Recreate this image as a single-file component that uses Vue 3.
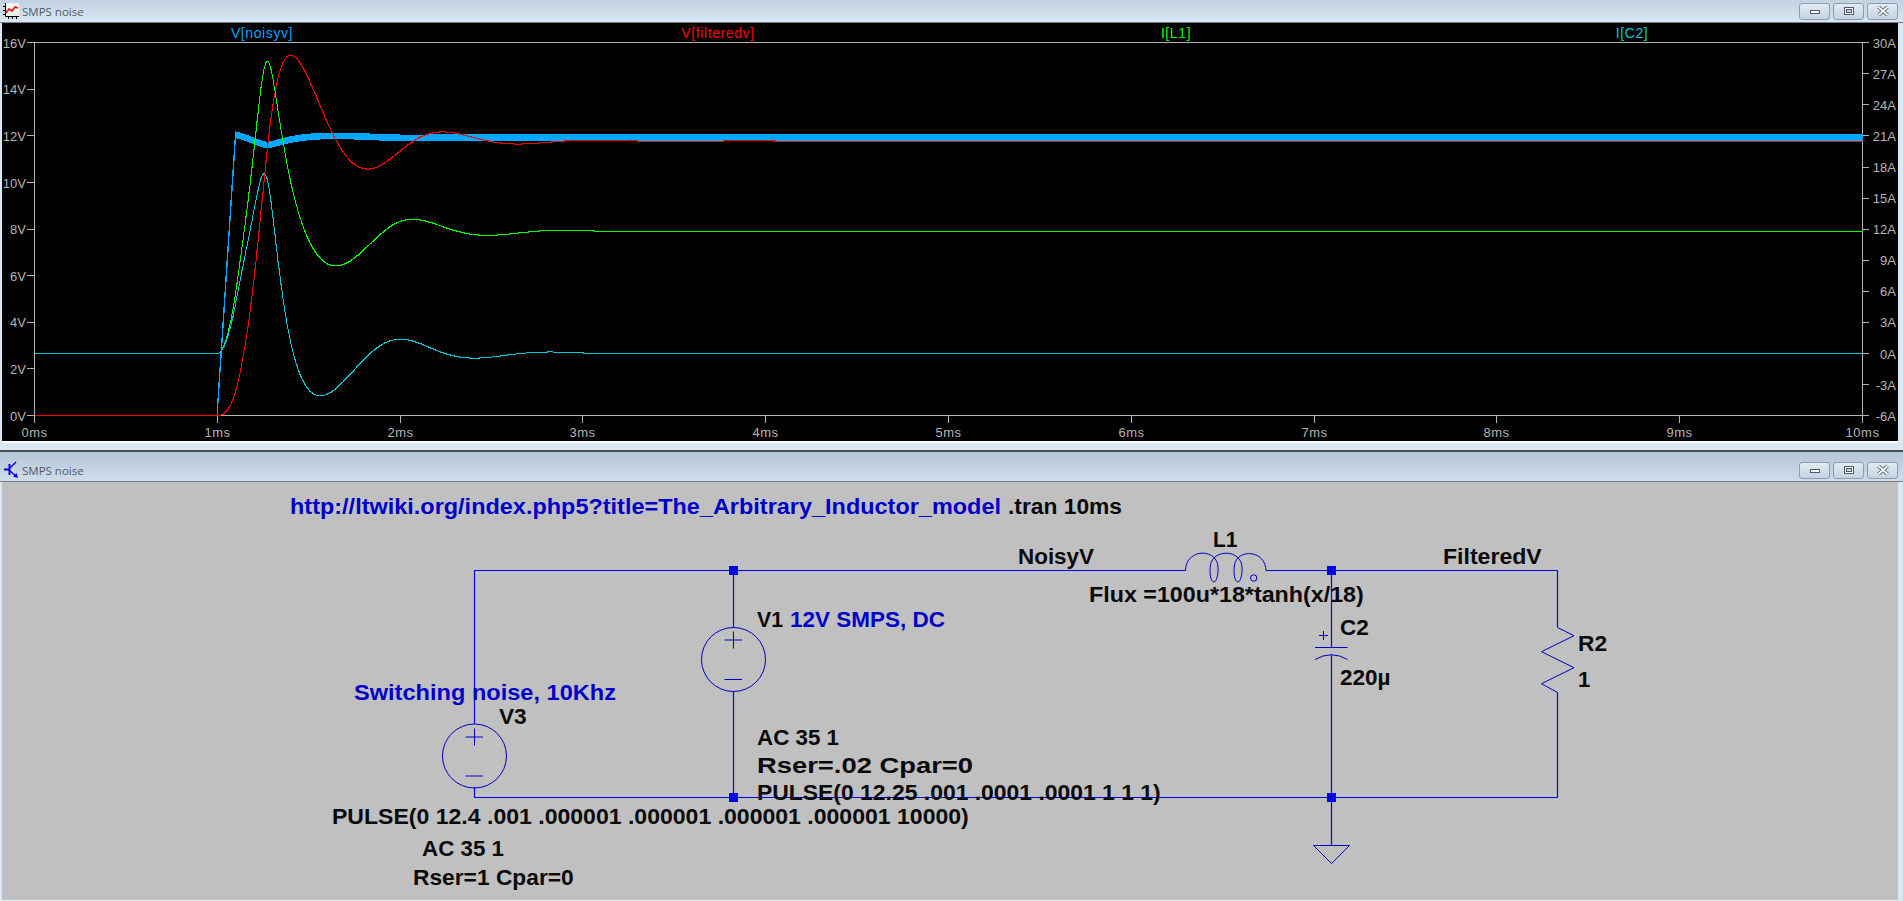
<script setup>
// plot scales, pixels on the page
const X0 = 34.5
const MS = 182.8
const VBOT = 415.5
const VPX = 23.3
const A0 = 353.5
const APX = 10.36
const ESR = 0.06

const xOf = (ms) => X0 + ms * MS
const yV = (v) => VBOT - v * VPX
const yA = (a) => A0 - a * APX
const snap = (n) => Math.round(n - 0.5) + 0.5

function simulate() {
  const top = []
  const bottom = []
  const filtered = []
  const il = []
  const ic = []
  let i = 0
  let vc = 0
  const dt = 2e-7
  const steps = Math.round(10e-3 / dt)
  for (let n = 0; n <= steps; n++) {
    const t = n * dt
    let v1 = 0
    if (t > 1e-3) v1 = t < 1.1e-3 ? (12.25 * (t - 1e-3)) / 1e-4 : 12.25
    const vn = (v1 / 0.02 - i) / 51
    const vout = (vc + ESR * i) / (1 + ESR)
    const ms = t * 1000
    const every = ms < 4 ? 5 : 500
    if (n % every === 0) {
      const x = xOf(ms)
      if (ms >= 1) {
        top.push(x.toFixed(1) + ',' + yV(vn + 0.28).toFixed(1))
        bottom.unshift(x.toFixed(1) + ',' + yV(vn + 0.04).toFixed(1))
      }
      const sx = snap(x)
      filtered.push(sx + ',' + snap(yV(vout)))
      il.push(sx + ',' + snap(yA(i)))
      ic.push(sx + ',' + snap(yA(i - vout)))
    }
    const sech = 1 / Math.cosh(i / 18)
    const L = 100e-6 * sech * sech
    i += ((vn - vout) / L) * dt
    vc += ((i - vout) / 220e-6) * dt
  }
  return {
    noisy: top.concat(bottom).join(' '),
    filtered: filtered.join(' '),
    il: il.join(' '),
    ic: ic.join(' '),
  }
}

const traces = simulate()

const leftTicks = [16, 14, 12, 10, 8, 6, 4, 2, 0].map((v) => ({ label: v + 'V', y: yV(v) }))
const rightTicks = [30, 27, 24, 21, 18, 15, 12, 9, 6, 3, 0, -3, -6].map((a) => ({ label: a + 'A', y: yA(a) }))
const timeTicks = [0, 1, 2, 3, 4, 5, 6, 7, 8, 9, 10].map((k) => ({ label: k + 'ms', x: snap(xOf(k)) }))

const legend = [
  { label: 'V[noisyv]', x: 262, cls: 'legend-noisy' },
  { label: 'V[filteredv]', x: 718, cls: 'legend-filtered' },
  { label: 'I[L1]', x: 1176, cls: 'legend-il' },
  { label: 'I[C2]', x: 1632, cls: 'legend-ic' },
]

const wires = [
  'M474.5 724V570.5H1185.5',
  'M1266 570.5H1557.5V627',
  'M1557.5 692.5V797.5H474.5V787',
  'M733.5 570.5V627.5',
  'M733.5 691.5V797.5',
  'M1331.5 570.5V647',
  'M1331.5 655V845',
]
const symbols = [
  'M465.5 737H483M465.5 776H483M474.5 728.5V745.5',
  'M724.5 640H742M724.5 679.5H742M733.5 631.5V648.5',
  'M1315 647.5H1347.5M1315 659.5Q1331.5 650 1347.5 659.5',
  'M1319 635.5H1328M1323.5 631V640',
  'M1313.5 845.5H1349.5L1331.5 863.5Z',
  'M1557.5 627.5L1574 635.7L1541.5 651.7L1574 667.7L1541.5 683.7L1557.5 692.5',
  'M1185.5 570.5C1186 548 1217 548 1218 567C1218.5 576 1216 582 1214 582C1211 582 1209 574 1210.5 565C1213 549 1241 549 1242 567C1242.5 576 1240 582 1238 582C1235 582 1233 574 1234.5 565C1237 549 1265 549 1266 570.5',
]
const nodes = [
  [733.5, 570.5],
  [733.5, 797.5],
  [1331.5, 570.5],
  [1331.5, 797.5],
]
// w is the width the label takes in the reference
const notes = [
  { text: 'http://ltwiki.org/index.php5?title=The_Arbitrary_Inductor_model', x: 290, y: 514, w: 711, blue: true },
  { text: '.tran 10ms', x: 1008, y: 514, w: 114 },
  { text: 'NoisyV', x: 1018, y: 564, w: 76 },
  { text: 'L1', x: 1213, y: 547, w: 24.5 },
  { text: 'FilteredV', x: 1443, y: 564, w: 98.7 },
  { text: 'Flux =100u*18*tanh(x/18)', x: 1089, y: 602, w: 274.8 },
  { text: 'C2', x: 1340, y: 635, w: 28.7 },
  { text: '220µ', x: 1340, y: 685, w: 50.5 },
  { text: 'R2', x: 1578, y: 651, w: 29 },
  { text: '1', x: 1578, y: 687 },
  { text: 'V1', x: 757, y: 627, w: 26 },
  { text: '12V SMPS, DC', x: 790, y: 627, w: 155, blue: true },
  { text: 'AC 35 1', x: 757, y: 745, w: 82 },
  { text: 'Rser=.02 Cpar=0', x: 757, y: 773, w: 216 },
  { text: 'PULSE(0 12.25 .001 .0001 .0001 1 1 1)', x: 757, y: 800, w: 403.7 },
  { text: 'Switching noise, 10Khz', x: 354, y: 700, w: 262, blue: true },
  { text: 'V3', x: 499, y: 724, w: 27.7 },
  { text: 'PULSE(0 12.4 .001 .000001 .000001 .000001 .000001 10000)', x: 332, y: 824, w: 636.8 },
  { text: 'AC 35 1', x: 422, y: 856, w: 82 },
  { text: 'Rser=1 Cpar=0', x: 413, y: 885, w: 160.7 },
]
</script>

<template>
  <div class="desktop">
    <section class="window">
      <header class="titlebar titlebar-plot">
        <svg class="app-icon" width="16" height="16" viewBox="0 0 16 16">
          <rect x="2" y="0" width="14" height="13" fill="#f4f0ec" />
          <path d="M2.5 0V13.5H16M0 3.5H2M0 7.5H2M0 11.5H2M5.5 14V16M9.5 14V16M13.5 14V16" stroke="#000" fill="none" />
          <path d="M3 10L6 6L9 8L12 4L15 5" stroke="#e01010" stroke-width="1.6" fill="none" />
        </svg>
        <span class="title">SMPS noise</span>
        <div class="controls">
          <button class="ctl">
            <svg width="14" height="8" viewBox="0 0 14 8"><rect x="2.5" y="3.5" width="9" height="3" fill="#fff" stroke="#4b5a68" /></svg>
          </button>
          <button class="ctl">
            <svg width="14" height="10" viewBox="0 0 14 10"><rect x="2.5" y="1.5" width="9" height="7" fill="#fff" stroke="#4b5a68" /><rect x="4.5" y="3.5" width="5" height="3" fill="#c9d8e6" stroke="#4b5a68" /></svg>
          </button>
          <button class="ctl">
            <svg width="14" height="10" viewBox="0 0 14 10"><path d="M2.5 1L11.5 9M11.5 1L2.5 9" stroke="#4b5a68" stroke-width="3.6" /><path d="M2.5 1L11.5 9M11.5 1L2.5 9" stroke="#fff" stroke-width="1.8" /></svg>
          </button>
        </div>
      </header>
      <div class="client client-plot">
        <svg class="canvas" width="1896" height="418" viewBox="2 23 1896 418">
          <g class="axes">
            <path d="M34.5 42.5H1862.5V415.5H34.5Z" />
            <path v-for="t in leftTicks" :key="t.label" :d="`M27 ${t.y}H34.5`" />
            <path v-for="t in rightTicks" :key="t.label" :d="`M1862.5 ${t.y}H1869`" />
            <path v-for="t in timeTicks" :key="t.label" :d="`M${t.x} 415.5V423`" />
          </g>
          <text v-for="t in leftTicks" :key="t.label" class="tick" x="26" :y="t.y + 5" text-anchor="end">{{ t.label }}</text>
          <text v-for="t in rightTicks" :key="t.label" class="tick" x="1896" :y="t.y + 5" text-anchor="end">{{ t.label }}</text>
          <text v-for="t in timeTicks" :key="t.label" class="tick tick-time" :x="t.x" y="437" text-anchor="middle">{{ t.label }}</text>
          <text v-for="l in legend" :key="l.label" class="tick legend" :class="l.cls" :x="l.x" y="38" text-anchor="middle">{{ l.label }}</text>

          <polygon class="band" :points="traces.noisy" />
          <polyline class="trace trace-filtered" :points="traces.filtered" />
          <polyline class="trace trace-il" :points="traces.il" />
          <polyline class="trace trace-ic" :points="traces.ic" />
        </svg>
      </div>
    </section>

    <section class="window window-lower">
      <header class="titlebar titlebar-schem">
        <svg class="app-icon" width="16" height="18" viewBox="0 0 16 18">
          <path d="M6.5 3V14M1 8.5H6.5" stroke="#0000e0" stroke-width="2" fill="none" />
          <path d="M7 7L13 1M7 10L13 15" stroke="#0000e0" stroke-width="1.4" fill="none" />
          <path d="M10 15.5L15 17L13.5 12Z" fill="#0000e0" />
        </svg>
        <span class="title">SMPS noise</span>
        <div class="controls">
          <button class="ctl">
            <svg width="14" height="8" viewBox="0 0 14 8"><rect x="2.5" y="3.5" width="9" height="3" fill="#fff" stroke="#4b5a68" /></svg>
          </button>
          <button class="ctl">
            <svg width="14" height="10" viewBox="0 0 14 10"><rect x="2.5" y="1.5" width="9" height="7" fill="#fff" stroke="#4b5a68" /><rect x="4.5" y="3.5" width="5" height="3" fill="#c9d8e6" stroke="#4b5a68" /></svg>
          </button>
          <button class="ctl">
            <svg width="14" height="10" viewBox="0 0 14 10"><path d="M2.5 1L11.5 9M11.5 1L2.5 9" stroke="#4b5a68" stroke-width="3.6" /><path d="M2.5 1L11.5 9M11.5 1L2.5 9" stroke="#fff" stroke-width="1.8" /></svg>
          </button>
        </div>
      </header>
      <div class="client client-schem">
        <svg class="canvas" width="1896" height="418" viewBox="2 482 1896 418">
          <path v-for="(d, n) in wires" :key="n" class="wire" :d="d" />
          <path v-for="(d, n) in symbols" :key="n" class="symbol" :d="d" />
          <circle class="symbol" cx="474.5" cy="756" r="32" />
          <circle class="symbol" cx="733.5" cy="659.5" r="32" />
          <circle class="symbol" cx="1253.7" cy="578" r="3.2" />
          <rect v-for="(p, n) in nodes" :key="n" class="node" :x="p[0] - 4.5" :y="p[1] - 4.5" width="9" height="9" />
          <text
            v-for="(t, n) in notes"
            :key="n"
            class="note"
            :class="{ 'note-blue': t.blue }"
            :x="t.x"
            :y="t.y"
            :textLength="t.w"
            lengthAdjust="spacingAndGlyphs"
          >{{ t.text }}</text>
        </svg>
      </div>
    </section>
  </div>
</template>

<style>
html, body {
  margin: 0;
  overflow: hidden;
}
</style>

<style scoped>
.desktop {
  width: 1903px;
  height: 901px;
  display: flex;
  flex-direction: column;
  background-color: #dbe7f3;
  overflow: hidden;
}

.window-lower {
  margin-top: 7px;
  border-top: 2px solid #4a4e52;
}

.titlebar {
  display: flex;
  align-items: center;
  box-sizing: border-box;
  padding-left: 3px;
  border-bottom: 1px solid #7a7f85;
}

.titlebar-plot {
  height: 23px;
  background: linear-gradient(#c3d2e1, #d9e6f3);
}

.titlebar-schem {
  height: 30px;
  padding-top: 7px;
  background: linear-gradient(#b5c6d8, #cfdcea);
}

.app-icon {
  flex: none;
  margin-right: 3px;
}

.title {
  font-family: "Open Sans", sans-serif;
  font-size: 11.5px;
  color: #4e5c6a;
}

.controls {
  margin-left: auto;
  margin-right: 5px;
  display: flex;
  gap: 3px;
  align-items: center;
}

.ctl {
  width: 31px;
  height: 17px;
  padding: 0;
  display: flex;
  align-items: center;
  justify-content: center;
  border: 1px solid #8c9cad;
  border-radius: 3px;
  background: linear-gradient(#e3ebf3, #c5d3e2);
}

.client {
  margin: 0 5px 0 2px;
  height: 418px;
}

.client-plot {
  background-color: #000;
  border-bottom: 2px solid #fff;
}

.client-schem {
  background-color: #c0c0c0;
  border-bottom: 1px solid #eef2f6;
}

.canvas {
  display: block;
}

.axes path {
  fill: none;
  stroke: #b4b4b4;
  stroke-width: 1;
  shape-rendering: crispEdges;
}

.tick {
  font-family: "Liberation Sans", Arial, sans-serif;
  font-size: 13px;
  fill: #b4b4b4;
}

.tick-time {
  letter-spacing: 0.5px;
}

.legend {
  font-size: 14px;
  letter-spacing: 0.6px;
}

.legend-noisy {
  fill: #00a8ff;
}

.legend-filtered {
  fill: #ff0000;
}

.legend-il {
  fill: #00ff00;
}

.legend-ic {
  fill: #00c8d8;
}

.band {
  fill: #00a8ff;
  stroke: #00a8ff;
  stroke-width: 1;
  shape-rendering: crispEdges;
}

.trace {
  fill: none;
  stroke-width: 1.2;
  shape-rendering: crispEdges;
}

.trace-filtered {
  stroke: #ff0000;
}

.trace-il {
  stroke: #00ff00;
}

.trace-ic {
  stroke: #00c8d8;
}

.wire {
  fill: none;
  stroke: #0000f0;
  stroke-width: 1.2;
}

.symbol {
  fill: none;
  stroke: #0000c0;
  stroke-width: 1;
}

.node {
  fill: #0000f0;
}

.note {
  font-family: "Liberation Sans", Arial, sans-serif;
  font-size: 22px;
  font-weight: 700;
  fill: #0a0a0a;
}

.note-blue {
  fill: #0000c8;
}
</style>
